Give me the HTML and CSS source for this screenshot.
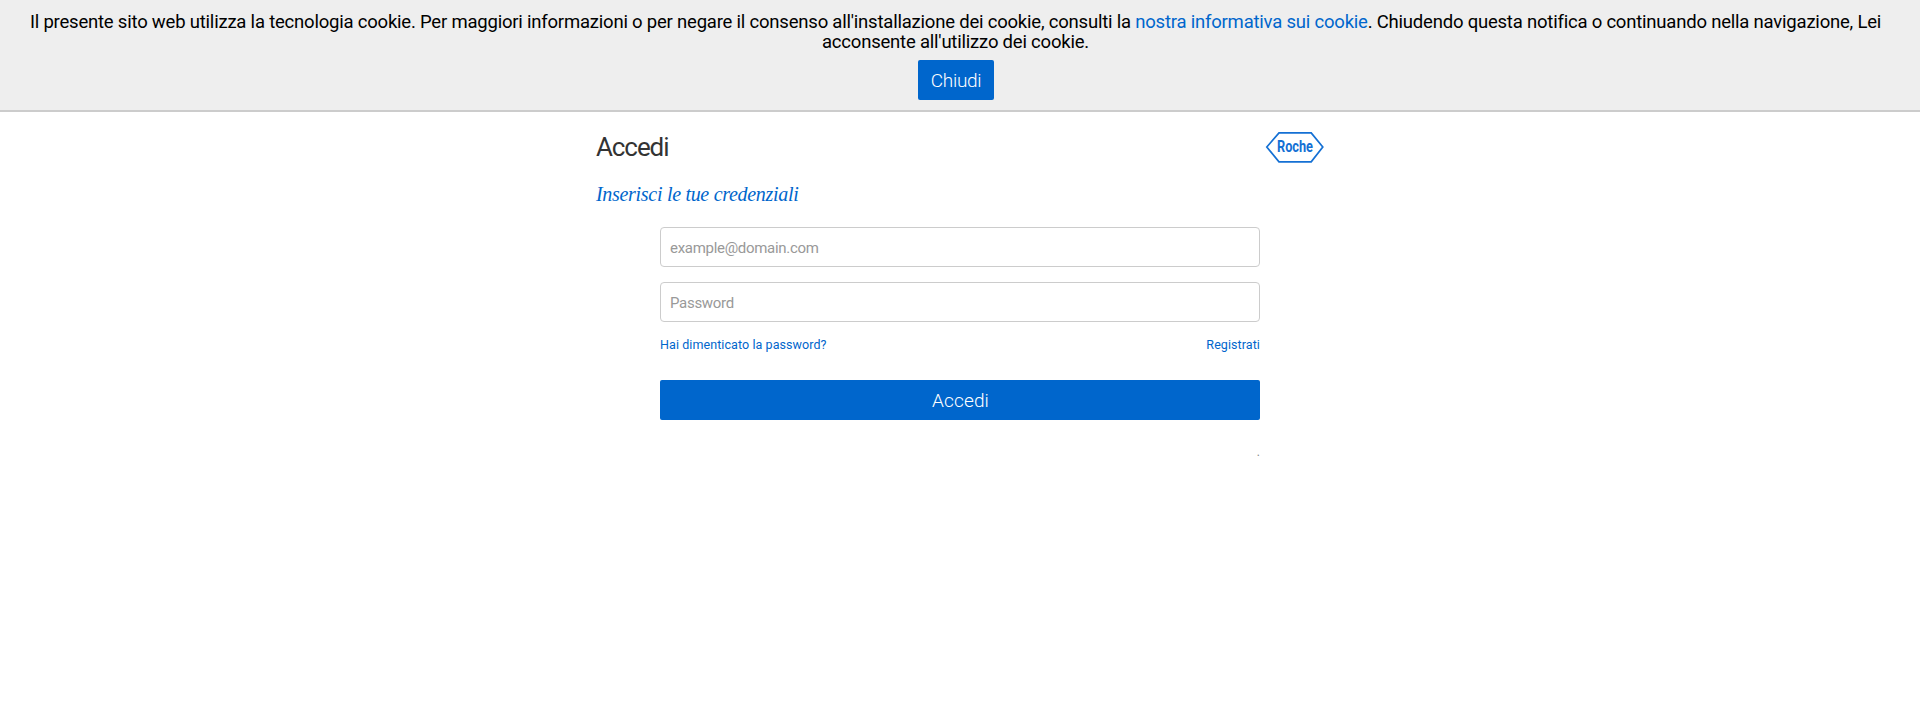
FILE: index.html
```html
<!DOCTYPE html>
<html lang="it">
<head>
<meta charset="utf-8">
<title>Accedi</title>
<link rel="stylesheet" href="styles.css">
</head>
<body>
<div class="cookie-bar">
  <p class="cookie-text"><span class="cookie-main">Il presente sito web utilizza la tecnologia cookie. Per maggiori informazioni o per negare il consenso all'installazione dei cookie, consulti la <a href="#">nostra informativa sui cookie</a>. Chiudendo questa notifica o continuando nella navigazione, Lei</span><br><span class="cookie-rest">acconsente all'utilizzo dei cookie.</span></p>
  <button class="btn btn-close">Chiudi</button>
</div>
<main class="login">
  <header class="login-head">
    <h1>Accedi</h1>
    <svg class="logo" viewBox="0 0 60 32" width="60" height="32" role="img" aria-label="Roche">
      <path d="M2.8 16 15 1.9H47.2L58.8 16 47.2 30.8H15Z" fill="none" stroke="#1470d4" stroke-width="1.7"/>
      <text x="13" y="21.3" textLength="36" lengthAdjust="spacingAndGlyphs">Roche</text>
    </svg>
  </header>
  <h2>Inserisci le tue credenziali</h2>
  <form class="form">
    <input class="email" type="text" placeholder="example@domain.com">
    <input class="password" type="password" placeholder="Password">
    <div class="links"><a class="forgot" href="#">Hai dimenticato la password?</a><a class="register" href="#">Registrati</a></div>
    <button type="button" class="btn btn-login">Accedi</button>
    <div class="dot">.</div>
  </form>
</main>
</body>
</html>
```
FILE: styles.css
```css
* { box-sizing: border-box; }
body { margin: 0; background: #fff; font-family: Roboto, "Liberation Sans", sans-serif; }
a { color: #06c; text-decoration: none; }
.cookie-bar { height: 112px; padding-top: 12px; background: #eee; border-bottom: 2px solid #ccc; text-align: center; }
.cookie-text { margin: 0 0 8px; padding-right: 9px; font-size: 18.5px; letter-spacing: -0.208px; line-height: 20px; color: #000; white-space: nowrap; }
.cookie-bar .btn { margin-right: 8px; }
.btn { display: inline-block; padding: 0; height: 40px; border: 0; border-radius: 2px; background: #06c; color: #fff; font-family: inherit; font-weight: 300; font-size: 19px; line-height: 42px; }
.btn-close { width: 76px; letter-spacing: -0.3px; }
.btn-login { padding-left: 1px; letter-spacing: 0.15px; }
.login { width: 728px; margin: 0 auto; }
.login-head { display: flex; justify-content: space-between; align-items: flex-start; padding-top: 19px; height: 68px; }
h1 { margin: 0; font-size: 26px; line-height: 32px; font-weight: 400; letter-spacing: -1.1px; color: #333; }
.logo { display: block; }
.logo text { font: 700 17px Roboto, sans-serif; fill: #1470d4; }
h2 { margin: 0; height: 47px; font: italic 20px/28px "Liberation Serif", serif; letter-spacing: -0.3px; color: #06c; }
.form { width: 600px; margin: 0 auto; display: flex; flex-direction: column; }
input { display: block; width: 100%; height: 40px; margin: 0 0 15px; padding: 2px 9px 0; border: 1px solid #ccc; border-radius: 4px; background: #fff; font: 400 15px Roboto, sans-serif; letter-spacing: -0.3px; }
input::placeholder { color: #999; opacity: 1; }
.links { display: flex; justify-content: space-between; height: 43px; font-size: 12.5px; letter-spacing: 0.08px; line-height: 16px; }
.dot { margin-top: 24px; text-align: right; color: #888; font-size: 12px; line-height: 16px; }
```
